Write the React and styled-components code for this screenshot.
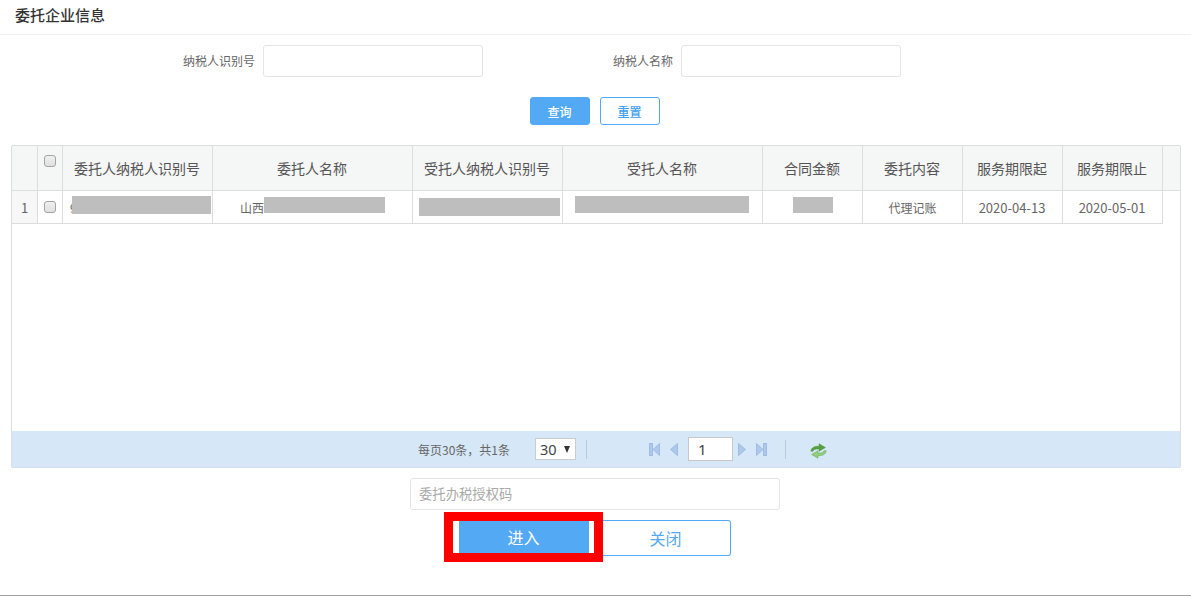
import React from "react";
import styled, { createGlobalStyle } from "styled-components";

const Global = createGlobalStyle`
  html, body { margin: 0; padding: 0; background: #fff; }
  body { width: 1191px; height: 596px; overflow: hidden; font-family: "Noto Sans CJK SC", "Noto Sans", sans-serif; }
  * { box-sizing: border-box; }
`;

const Page = styled.div`
  width: 1191px;
  height: 596px;
  display: flex;
  flex-direction: column;
  border-bottom: 1px solid #a6a6a6;
`;
const Header = styled.header`
  height: 35px;
  padding: 4px 0 0 15px;
  border-bottom: 1px solid #eeeeee;
  font-size: 15px;
  line-height: 22px;
  font-weight: 500;
  color: #333;
`;
const SearchRow = styled.div`
  display: flex;
  margin-top: 10px;
  padding-left: 263px;
`;
const Field = styled.label`
  position: relative;
  display: block;
  width: 220px;
  margin-right: ${(p) => p.$gap || 0}px;
`;
const FieldLabel = styled.span`
  position: absolute;
  right: 228px;
  top: 0;
  line-height: 32px;
  font-size: 12px;
  color: #666;
  white-space: nowrap;
`;
const TextInput = styled.input`
  display: block;
  width: ${(p) => p.$w || 220}px;
  height: 32px;
  padding: 0 8px 2px;
  border: 1px solid #e4e4e4;
  border-radius: 3px;
  background: #fff;
  outline: none;
  font: 13.333px "Noto Sans CJK SC", sans-serif;
  &::placeholder { color: #a9a9a9; opacity: 1; }
`;
const QueryRow = styled.div`
  display: flex;
  gap: 10px;
  margin-top: 20px;
  padding-left: 530px;
`;
const SmallButton = styled.button`
  width: 60px;
  height: 28px;
  padding: 0 1px 0 0;
  border: 1px solid #53a9f4;
  border-radius: 3px;
  background: ${(p) => (p.$solid ? "#53a9f4" : "#fff")};
  color: ${(p) => (p.$solid ? "#fff" : "#3fa0f2")};
  font: 500 12px "Noto Sans CJK SC", sans-serif;
`;
const Grid = styled.section`
  width: 1170px;
  height: 323px;
  margin: 20px 0 0 11px;
  border: 1px solid #dddddd;
  border-bottom-color: #d3dfea;
  border-radius: 2px;
  display: flex;
  flex-direction: column;
`;
const HeadRow = styled.div`
  display: flex;
  height: 45px;
  background: #f5f6f6;
  border-bottom: 1px solid #dddddd;
`;
const BodyRow = styled.div`
  display: flex;
  width: 1151px;
  height: 33px;
  border-bottom: 1px solid #dddddd;
`;
const Spacer = styled.div`
  flex: 1;
`;
const HeadCell = styled.div`
  width: ${(p) => p.$w}px;
  flex: none;
  display: flex;
  align-items: center;
  justify-content: center;
  padding-right: 1px;
  padding-bottom: 1px;
  border-right: 1px solid #dddddd;
  font-size: 14px;
  color: #555;
  white-space: nowrap;
`;
const CheckHead = styled(HeadCell)`
  align-items: flex-start;
  padding: 9px 0 0;
`;
const Cell = styled.div`
  width: ${(p) => p.$w}px;
  flex: none;
  display: flex;
  align-items: center;
  justify-content: ${(p) => (p.$start ? "flex-start" : "center")};
  padding-left: ${(p) => p.$pad || 0}px;
  border-right: 1px solid #dddddd;
  font-size: 12px;
  color: #666;
  white-space: nowrap;
`;
const NumCell = styled(Cell)`
  background: #f7f7f7;
  font-size: 13px;
`;
const DateCell = styled(Cell)`
  font-size: 13px;
  padding-right: 1px;
`;
const Redact = styled.span`
  flex: none;
  align-self: flex-start;
  width: ${(p) => p.$w}px;
  height: ${(p) => p.$h}px;
  margin-top: ${(p) => p.$top}px;
  margin-left: ${(p) => p.$left || 0}px;
  background: #bebebe;
`;
const Check = styled.span`
  display: block;
  width: 12px;
  height: 12px;
  border: 1px solid #a4a4a4;
  border-radius: 3px;
  background: linear-gradient(#f0f0f0, #e0e0e0);
`;
const Pager = styled.div`
  margin-top: auto;
  height: 36px;
  background: #d6e7f7;
  display: flex;
  align-items: center;
  font-size: 12px;
  color: #666;
  padding-left: 406px;
`;
const PagerText = styled.span`
  width: 117px;
  white-space: nowrap;
`;
const PageSize = styled.div`
  width: 41px;
  height: 22px;
  display: flex;
  align-items: center;
  justify-content: space-between;
  padding: 0 5px 0 4px;
  background: #fff;
  border: 1px solid #cccccc;
  font: 14.5px "Noto Sans", sans-serif;
  color: #444;
`;
const Caret = styled.span`
  width: 0;
  height: 0;
  border-left: 3.5px solid transparent;
  border-right: 3.5px solid transparent;
  border-top: 7px solid #333;
`;
const Sep = styled.span`
  width: 1px;
  height: 19px;
  background: #bccbd9;
  margin-left: ${(p) => p.$left}px;
`;
const PageBtn = styled.svg`
  display: block;
  flex: none;
  margin-left: ${(p) => p.$left}px;
`;
const RefreshBtn = styled(PageBtn)`
  margin-top: 3px;
`;
const PageInput = styled.div`
  width: 45px;
  height: 24px;
  margin-left: 9px;
  padding-left: 9px;
  background: #fff;
  border: 1px solid #c8c8c8;
  font: 15px/22px "Noto Sans", sans-serif;
  color: #444;
`;
const ActionArea = styled.div`
  display: flex;
  flex-direction: column;
  align-items: flex-start;
`;
const CodeRow = styled.div`
  margin: 10px 0 0 410px;
`;
const ActionRow = styled.div`
  display: flex;
  align-items: flex-start;
  margin: 2px 0 0 444px;
`;
const Highlight = styled.div`
  width: 159px;
  height: 50px;
  padding: 0 5px 0 6px;
  border: 9px solid #ff0000;
  background: #fff;
`;
const EnterButton = styled.button`
  display: block;
  width: 130px;
  height: 32px;
  padding: 0 1px 0 0;
  border: 0;
  background: #53a9f4;
  color: #fff;
  font: 16px "Noto Sans CJK SC", sans-serif;
`;
const CloseButton = styled.button`
  width: 128px;
  height: 36px;
  margin-top: 8px;
  padding: 0 2px 0 0;
  border: 1px solid #53a9f4;
  border-left: 0;
  border-radius: 0 3px 3px 0;
  background: #fff;
  color: #53a9f4;
  font: 16px "Noto Sans CJK SC", sans-serif;
`;

const iconBlue = "#aec8ec";
const iconEdge = "#a0bce4";
const First = () => (
  <PageBtn $left={62} width="11" height="16" viewBox="0 0 11 16">
    <rect x="0.5" y="2.5" width="3" height="12" fill={iconBlue} stroke={iconEdge} />
    <path d="M10.5 2.5V14.5L4 8.5Z" fill={iconBlue} stroke={iconEdge} />
  </PageBtn>
);
const Prev = () => (
  <PageBtn $left={9} width="10" height="16" viewBox="0 0 10 16">
    <path d="M8.5 2.5V14.5L1.5 8.5Z" fill={iconBlue} stroke={iconEdge} />
  </PageBtn>
);
const Next = () => (
  <PageBtn $left={4} width="10" height="16" viewBox="0 0 10 16">
    <path d="M1.5 2.5V14.5L8.5 8.5Z" fill={iconBlue} stroke={iconEdge} />
  </PageBtn>
);
const Last = () => (
  <PageBtn $left={9} width="11" height="16" viewBox="0 0 11 16">
    <path d="M0.5 2.5V14.5L7 8.5Z" fill={iconBlue} stroke={iconEdge} />
    <rect x="7.5" y="2.5" width="3" height="12" fill={iconBlue} stroke={iconEdge} />
  </PageBtn>
);
const Refresh = () => (
  <RefreshBtn $left={24} width="17" height="16" viewBox="0 0 17 16">
    <path d="M0.8 8.2C1.4 4.6 4.6 3 9 3.4V0.8L15.4 4.6 9 8.2V6C6 5.6 3.6 6.2 3 8.2Z" fill="#55a044" stroke="#4a8f3a" strokeWidth="0.5" />
    <path d="M16.2 7.8C15.6 11.4 12.4 13 8 12.6V15.2L1.6 11.4 8 7.8V10C11 10.4 13.4 9.8 14 7.8Z" fill="#93d07a" stroke="#5da34a" strokeWidth="0.5" />
  </RefreshBtn>
);

const columns = [
  ["委托人纳税人识别号", 150],
  ["委托人名称", 200],
  ["受托人纳税人识别号", 150],
  ["受托人名称", 200],
  ["合同金额", 100],
  ["委托内容", 100],
  ["服务期限起", 100],
  ["服务期限止", 100],
];

export default function App() {
  return (
    <Page>
      <Global />
      <Header>委托企业信息</Header>
      <SearchRow>
        <Field $gap={198}>
          <FieldLabel>纳税人识别号</FieldLabel>
          <TextInput />
        </Field>
        <Field>
          <FieldLabel>纳税人名称</FieldLabel>
          <TextInput />
        </Field>
      </SearchRow>
      <QueryRow>
        <SmallButton $solid>查询</SmallButton>
        <SmallButton>重置</SmallButton>
      </QueryRow>
      <Grid>
        <HeadRow>
          <HeadCell $w={26} />
          <CheckHead $w={25}>
            <Check />
          </CheckHead>
          {columns.map(([label, w]) => (
            <HeadCell key={label} $w={w}>
              {label}
            </HeadCell>
          ))}
          <Spacer />
        </HeadRow>
        <BodyRow>
          <NumCell $w={26}>1</NumCell>
          <Cell $w={25}>
            <Check />
          </Cell>
          <Cell $w={150} $start $pad={7}>
            9<Redact $w={139} $h={18} $top={5} $left={-5} />
          </Cell>
          <Cell $w={200} $start $pad={27}>
            山西<Redact $w={121} $h={16} $top={6} />
          </Cell>
          <Cell $w={150} $start>
            <Redact $w={141} $h={18} $top={7} $left={6} />
          </Cell>
          <Cell $w={200} $start>
            <Redact $w={174} $h={17} $top={5} $left={12} />
          </Cell>
          <Cell $w={100} $start>
            <Redact $w={40} $h={16} $top={6} $left={30} />
          </Cell>
          <Cell $w={100}>代理记账</Cell>
          <DateCell $w={100}>2020-04-13</DateCell>
          <DateCell $w={100}>2020-05-01</DateCell>
        </BodyRow>
        <Pager>
          <PagerText>每页30条，共1条</PagerText>
          <PageSize>
            30
            <Caret />
          </PageSize>
          <Sep $left={10} />
          <First />
          <Prev />
          <PageInput>1</PageInput>
          <Next />
          <Last />
          <Sep $left={18} />
          <Refresh />
        </Pager>
      </Grid>
      <ActionArea>
        <CodeRow>
          <TextInput $w={370} placeholder="委托办税授权码" />
        </CodeRow>
        <ActionRow>
          <Highlight>
            <EnterButton>进入</EnterButton>
          </Highlight>
          <CloseButton>关闭</CloseButton>
        </ActionRow>
      </ActionArea>
    </Page>
  );
}
